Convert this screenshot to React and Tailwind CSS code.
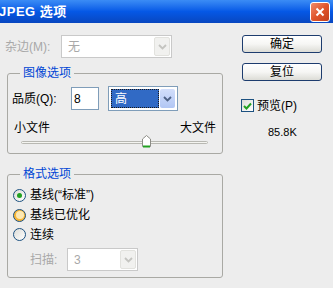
import React from 'react';

const font = { fontFamily: '"Liberation Sans", "Noto Sans CJK SC", sans-serif' };

const Chevron = ({ color }) => (
    <svg width="9" height="6" viewBox="0 0 9 6">
        <path d="M1 1 L4.5 4.5 L8 1" fill="none" stroke={color} strokeWidth="1.8" />
    </svg>
);

const DisabledSelect = ({ value, w }) => (
    <div className={`${w} h-[23px] border border-[#c9c9c9] bg-white flex items-center`}>
        <span className="flex-1 pl-[6px] text-[#a8a8a8] text-[12px]">{value}</span>
        <div className="w-[16px] h-[19px] mr-[1px] bg-[#f1f1ef] border border-[#e2e2de] rounded-[2px] flex items-center justify-center">
            <Chevron color="#c4c4c0" />
        </div>
    </div>
);

const Radio = ({ state }) => {
    if (state === 'checked') {
        return (
            <div className="w-[13px] h-[13px] rounded-full border border-[#1c5180] bg-gradient-to-br from-[#dcdcd7] to-white flex items-center justify-center">
                <div className="w-[5px] h-[5px] rounded-full bg-[#21a121]" />
            </div>
        );
    }
    if (state === 'hover') {
        return (
            <div className="w-[13px] h-[13px] rounded-full border border-[#1c5180] bg-[#f8b636] flex items-center justify-center">
                <div className="w-[8px] h-[8px] rounded-full bg-[#fde8b2]" />
            </div>
        );
    }
    return <div className="w-[13px] h-[13px] rounded-full border border-[#1c5180] bg-gradient-to-br from-[#dcdcd7] to-white" />;
};

const XpButton = ({ children, className = '' }) => (
    <div className={`w-[80px] h-[18px] rounded-[3px] border border-[#1d3c6e] bg-gradient-to-b from-white via-[#f6f6f4] to-[#dcdcd6] flex items-center justify-center text-[12px] text-black ${className}`}>
        {children}
    </div>
);

export default function App() {
    return (
        <div className="w-[333px] h-[288px] overflow-hidden bg-[#ededed] flex flex-col text-[12px] leading-[14px]" style={font}>
            {/* Title bar */}
            <div className="h-[23px] flex items-center justify-between pr-[3px] bg-gradient-to-b from-[#3b8cf5] via-[#0558e6] to-[#0847c0] flex-shrink-0">
                <span className="ml-[-1px] text-white font-bold text-[13px] tracking-[0.5px]">JPEG 选项</span>
                <div className="w-[20px] h-[20px] rounded-[3px] border border-white bg-gradient-to-br from-[#f08a6a] via-[#e0552b] to-[#c4401c] flex items-center justify-center">
                    <svg width="10" height="10" viewBox="0 0 10 10">
                        <path d="M1.5 1.5 L8.5 8.5 M8.5 1.5 L1.5 8.5" stroke="white" strokeWidth="2" />
                    </svg>
                </div>
            </div>

            <div className="flex flex-1">
                {/* Left column */}
                <div className="w-[223px] pl-[5px] pt-[12px]">
                    <div className="flex items-center h-[23px]">
                        <span className="w-[56px] text-[#a8a8a8]">杂边(M):</span>
                        <DisabledSelect value="无" w="w-[111px]" />
                    </div>

                    <fieldset className="ml-[2px] mt-[7px] w-[216px] border border-[#a9a9a4] rounded-[3px] pb-[5px]">
                        <legend className="ml-[12px] px-[3px] text-[#0046d5] leading-[16px]">图像选项</legend>
                        <div className="mt-[5px] h-[25px] flex items-center pl-[4px]">
                            <span className="w-[59px]">品质(Q):</span>
                            <div className="w-[28px] h-[23px] border border-[#7f9db9] bg-white flex items-center pl-[2px]">8</div>
                            <div className="ml-[9px] w-[70px] h-[25px] border border-[#7f9db9] bg-white flex items-center p-[2px]">
                                <div className="flex-1 h-full bg-[#316ac5] border border-dotted border-[#1a1a1a] text-white flex items-center pl-[3px]">高</div>
                                <div className="w-[15px] h-full ml-[1px] rounded-[2px] bg-gradient-to-b from-[#d2defb] to-[#b1c6f4] flex items-center justify-center">
                                    <Chevron color="#4d6185" />
                                </div>
                            </div>
                        </div>
                        <div className="mt-[10px] flex justify-between pl-[6px] pr-[6px]">
                            <span>小文件</span>
                            <span>大文件</span>
                        </div>
                        <div className="mt-[1px] h-[12px] relative">
                            <div className="absolute left-[13px] top-[5px] w-[187px] h-[3px] border border-[#b8b8b2] bg-[#f4f4f0] rounded-[2px]" />
                            <svg className="absolute left-[134px] top-[-1px]" width="9" height="13" viewBox="0 0 9 13">
                                <path d="M4.5 0.5 L8.5 4 L8.5 11.5 L0.5 11.5 L0.5 4 Z" fill="white" stroke="#8c8c86" />
                                <path d="M1 11.5 L8 11.5" stroke="#21a121" strokeWidth="2" />
                            </svg>
                        </div>
                    </fieldset>

                    <fieldset className="ml-[2px] mt-[12px] w-[216px] border border-[#a9a9a4] rounded-[3px] pb-[6px]">
                        <legend className="ml-[12px] px-[3px] text-[#0046d5] leading-[16px]">格式选项</legend>
                        <div className="mt-[3px]">
                            <div className="h-[20px] flex items-center pl-[5px]">
                                <Radio state="checked" />
                                <span className="ml-[4px]">基线(“标准”)</span>
                            </div>
                            <div className="h-[20px] flex items-center pl-[5px]">
                                <Radio state="hover" />
                                <span className="ml-[4px]">基线已优化</span>
                            </div>
                            <div className="h-[19px] flex items-center pl-[5px]">
                                <Radio state="off" />
                                <span className="ml-[4px]">连续</span>
                            </div>
                        </div>
                        <div className="mt-[4px] h-[23px] flex items-center pl-[22px]">
                            <span className="w-[37px] text-[#a8a8a8]">扫描:</span>
                            <DisabledSelect value="3" w="w-[71px]" />
                        </div>
                    </fieldset>
                </div>

                {/* Right column */}
                <div className="flex-1 pl-[19px] pt-[12px]">
                    <XpButton>确定</XpButton>
                    <XpButton className="mt-[10px]">复位</XpButton>
                    <div className="mt-[18px] h-[13px] flex items-center ml-[-1px]">
                        <div className="w-[13px] h-[13px] border border-[#1c5180] bg-gradient-to-br from-[#dcdcd7] to-white flex items-center justify-center">
                            <svg width="9" height="8" viewBox="0 0 9 8">
                                <path d="M1 4 L3.5 6.5 L8 1.5" fill="none" stroke="#21a121" strokeWidth="2" />
                            </svg>
                        </div>
                        <span className="ml-[3px]">预览(P)</span>
                    </div>
                    <div className="mt-[13px] pl-[26px] text-[11px]">85.8K</div>
                </div>
            </div>
        </div>
    );
}
